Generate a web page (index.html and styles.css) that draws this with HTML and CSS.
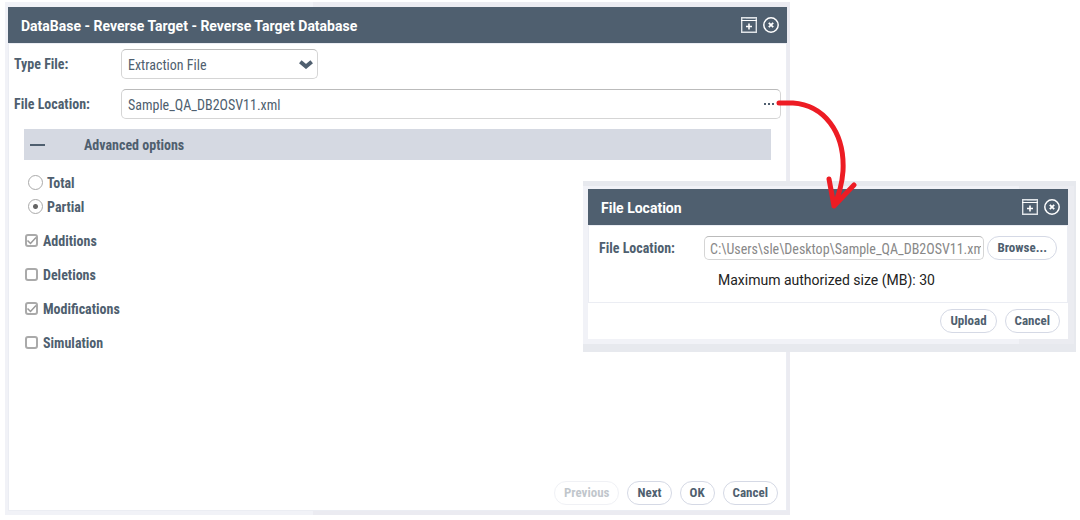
FILE: index.html
```html
<!DOCTYPE html>
<html lang="en">
    <head>
        <meta charset="utf-8">
        <title>Reverse Target Database</title>
        <link rel="stylesheet" href="styles.css">
    </head>
    <body>
    <svg class="defs" aria-hidden="true">
      <symbol id="maximize" viewBox="0 0 16 16">
        <path d="M0.7 0.7h14.6v14.6h-14.6z" fill="none" stroke="#dfe3e7" stroke-width="1.4"/>
        <path d="M0 3.5h16" fill="none" stroke="#fff"/>
        <path d="M5 1.5h10" fill="none" stroke="#aab3bc"/>
        <path d="M8 6.5v6M5 9.5h6" fill="none" stroke="#fff" stroke-width="1.6"/>
      </symbol>
      <symbol id="close" viewBox="0 0 16 16">
        <circle cx="8" cy="8" r="7.2" fill="none" stroke="#fff" stroke-width="1.5"/>
        <path d="M5.8 5.8l4.4 4.4M10.2 5.8l-4.4 4.4" stroke="#fff" stroke-width="1.8"/>
      </symbol>
    </svg>

    <main class="window">
      <header class="titlebar">
        <h1>DataBase - Reverse Target - Reverse Target Database</h1>
        <button type="button" class="tool" aria-label="Maximize"><svg><use href="#maximize"/></svg></button>
        <button type="button" class="tool" aria-label="Close"><svg><use href="#close"/></svg></button>
      </header>
      <form class="content">
        <div class="fields">
          <label for="type">Type File:</label>
          <div class="dropdown">
            <select id="type">
              <option selected>Extraction File</option>
            </select>
            <svg class="arrow" viewBox="0 0 14 9"><path d="M1.3 1.8l5.7 4.7l5.7-4.7" fill="none" stroke="#4f5f6f" stroke-width="4"/></svg>
          </div>
          <label for="location">File Location:</label>
          <div class="textbox">
            <input type="text" id="location" value="Sample_QA_DB2OSV11.xml">
            <button type="button" class="more" aria-label="Select file"><i></i><i></i><i></i></button>
          </div>
        </div>

        <button type="button" class="section"><span class="minus"></span>Advanced options</button>

        <div class="radios">
          <label><input type="radio" name="mode"><span>Total</span></label>
          <label><input type="radio" name="mode" checked><span>Partial</span></label>
        </div>
        <div class="checks">
          <label><span class="box"><input type="checkbox" checked><svg viewBox="0 0 13 13"><path d="M2.5 6.5l3 3l5.5-6"/></svg></span><span>Additions</span></label>
          <label><span class="box"><input type="checkbox"><svg viewBox="0 0 13 13"><path d="M2.5 6.5l3 3l5.5-6"/></svg></span><span>Deletions</span></label>
          <label><span class="box"><input type="checkbox" checked><svg viewBox="0 0 13 13"><path d="M2.5 6.5l3 3l5.5-6"/></svg></span><span>Modifications</span></label>
          <label><span class="box"><input type="checkbox"><svg viewBox="0 0 13 13"><path d="M2.5 6.5l3 3l5.5-6"/></svg></span><span>Simulation</span></label>
        </div>

        <footer class="buttons">
          <button type="button" class="btn" disabled>Previous</button>
          <button type="button" class="btn">Next</button>
          <button type="button" class="btn">OK</button>
          <button type="button" class="btn">Cancel</button>
        </footer>
      </form>
    </main>

    <section class="popup">
      <header class="titlebar">
        <h2>File Location</h2>
        <button type="button" class="tool" aria-label="Maximize"><svg><use href="#maximize"/></svg></button>
        <button type="button" class="tool" aria-label="Close"><svg><use href="#close"/></svg></button>
      </header>
      <form class="upload">
        <div class="pick">
          <label for="path">File Location:</label>
          <input type="text" id="path" class="path" value="C:\Users\sle\Desktop\Sample_QA_DB2OSV11.xml">
          <button type="button" class="btn">Browse...</button>
        </div>
        <p>Maximum authorized size (MB): 30</p>
      </form>
      <footer class="buttons">
        <button type="button" class="btn">Upload</button>
        <button type="button" class="btn">Cancel</button>
      </footer>
    </section>

    <svg class="pointer" viewBox="0 0 84 114" aria-hidden="true">
      <path d="M6 6H20C50 8 72 34 70 74C69 88 66 98 61 109M56 82L61 109L81 88"/>
    </svg>
    </body>
</html>
```

FILE: styles.css
```css
* { box-sizing: border-box; }
body { display: flow-root; margin: 0; position: relative; background: #fff; color: #4f5f6f; font-family: "Roboto Condensed", Roboto, sans-serif; font-size: 14px; line-height: 16px; }
button, input, select { font: inherit; color: inherit; margin: 0; }
button { padding: 0; border: 0; background: none; cursor: pointer; }
.defs { position: absolute; width: 0; height: 0; }

.window { display: flex; flex-direction: column; margin: 2px 290px 0 5px; min-height: 513px; padding: 5px 3px 4px; background: linear-gradient(90deg, #f1f2f7 308px, #ebebf1 308px); }
.titlebar { display: flex; align-items: center; gap: 6px; height: 36px; padding: 0 8px 0 13px; background: #4f5f6f; color: #fff; }
.titlebar h1, .titlebar h2 { flex: 1; margin: 0; padding-top: 2px; font-family: Roboto, sans-serif; font-size: 14px; font-weight: bold; }
.tool, .tool svg { display: block; width: 16px; height: 16px; }

.content { flex: 1; display: flex; flex-direction: column; padding: 5px; background: #fff; border: 1px solid #ebedf3; }
.content label, .pick label { font-weight: bold; }
.fields { display: grid; grid-template-columns: 107px 1fr; gap: 10px 0; align-items: center; }
.dropdown { display: grid; width: 197px; align-items: center; }
.dropdown > * { grid-area: 1 / 1; }
.dropdown select { height: 30px; padding: 2px 6px 0; border: 1px solid #d5d5d5; border-top-color: #bbb; border-radius: 5px; background: #fff; appearance: none; }
.arrow { justify-self: end; width: 14px; height: 9px; margin-right: 5px; pointer-events: none; }
.textbox { display: flex; align-items: center; height: 30px; padding: 0 6px; border: 1px solid #d5d5d5; border-top-color: #bbb; border-radius: 5px; }
.textbox input { flex: 1; min-width: 0; padding: 2px 0 0; border: 0; outline: none; }
.more { display: flex; gap: 2px; padding: 6px 0; }
.more i { width: 2px; height: 2px; background: #4f5f6f; }

.section { display: flex; align-items: center; gap: 39px; height: 31px; margin: 10px; padding: 0 6px; background: #d5d9e2; font-weight: bold; }
.minus { width: 15px; height: 2px; background: #4f5f6f; }

.radios, .checks { display: flex; flex-direction: column; align-items: flex-start; }
.radios span, .checks label > span:last-child { padding-top: 2px; }
.radios label { display: flex; align-items: center; gap: 4px; height: 24px; margin-left: 14px; }
.radios input { width: 15px; height: 15px; border: 1px solid #aaa; border-radius: 50%; appearance: none; background: #fff; }
.radios input:checked { background: radial-gradient(circle, #666 2px, #fff 3px); }
.checks { padding-top: 5px; }
.checks label { display: flex; align-items: center; gap: 5px; height: 34px; margin-left: 11px; }
.box { display: grid; width: 13px; height: 13px; }
.box > * { grid-area: 1 / 1; width: 13px; height: 13px; }
.box input { border: 2px solid #aaa; border-radius: 3px; background: #fff; appearance: none; }
.box svg { display: none; pointer-events: none; fill: none; stroke: #999; stroke-width: 1.5; }
.box input:checked + svg { display: block; }

.buttons { display: flex; justify-content: flex-end; gap: 8px; }
.content .buttons { margin-top: auto; padding-right: 3px; }
.btn { height: 24px; padding: 0 9px; border: 1px solid #d5d9e5; border-radius: 12px; background: #fff; font-size: 13px; font-weight: bold; white-space: nowrap; }
.btn:disabled { opacity: .35; cursor: default; }

/* upload dialog over the main window */
.popup { position: absolute; top: 181px; left: 583px; right: 4px; padding: 3px 6px 5px 5px; border: solid #e7e9ee; border-width: 5px 2px 8px 0; background: linear-gradient(90deg, #f1f2f7 436px, #ebecf1 436px); }
.upload { padding: 10px; border: 1px solid #ebedf3; background: #fff; }
.pick { display: flex; align-items: center; gap: 3px; }
.pick label { flex: 0 0 102px; }
.path { flex: 1; min-width: 0; height: 24px; padding: 2px 2px 0 5px; border: 1px solid #d5d5d5; border-top-color: #bbb; border-radius: 5px; color: #888; }
.upload p { margin: 12px 0 4px; padding-left: 119px; color: #222; font-family: Roboto, sans-serif; }
.popup .buttons { padding: 6px 8px; background: #fff; }

.pointer { position: absolute; left: 773px; top: 97px; width: 84px; height: 114px; pointer-events: none; fill: none; stroke: #ed1c24; stroke-width: 5; stroke-linecap: round; stroke-linejoin: round; }
```
